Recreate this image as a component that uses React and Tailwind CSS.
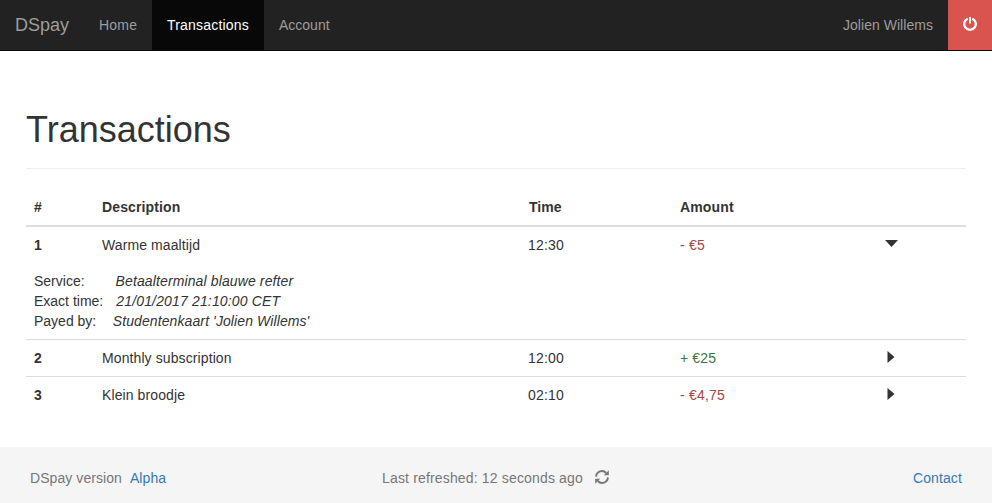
const rows = [
  {
    id: 1, name: 'Warme maaltijd', time: '12:30', amount: '- €5', credit: false, open: true,
  },
  { id: 2, name: 'Monthly subscription', time: '12:00', amount: '+ €25', credit: true },
  { id: 3, name: 'Klein broodje', time: '02:10', amount: '- €4,75', credit: false },
];

function PowerIcon() {
  return (
    <svg className="mt-[17px] size-[14px]" viewBox="0 0 14 14" fill="none" stroke="white" strokeWidth="2.3">
      <path d="M4.7 1.7A5.8 5.8 0 1 0 9.3 1.7" />
      <path d="M7 0v6.6" strokeWidth="2" />
    </svg>
  );
}

function RefreshIcon() {
  return (
    <svg className="ml-[12.5px] mt-[-2px] h-[14px] w-[14px]" viewBox="0 0 14 14" fill="none" stroke="#777" strokeWidth="1.9">
      <path d="M1.1 6.6A5.8 5.8 0 0 1 11.2 3" />
      <path d="M12.9 7.4A5.8 5.8 0 0 1 2.8 11" />
      <path d="M13.8 .2v5H8.8z" fill="#777" stroke="none" />
      <path d="M.2 13.8v-5h5z" fill="#777" stroke="none" />
    </svg>
  );
}

function Caret({ open }) {
  return open ? (
    <svg className="mt-[5px] h-[7px] w-[13px]" viewBox="0 0 13 7"><path d="M0 0h13L6.5 7z" fill="#333" /></svg>
  ) : (
    <svg className="ml-[2px] mt-[3px] h-[12px] w-[8px]" viewBox="0 0 8 12"><path d="M.5 0v12l7-6z" fill="#333" /></svg>
  );
}

function Row({ row }) {
  return (
    <div className={row.id === 1 ? 'border-t-2 border-[#ddd]' : 'border-t border-[#ddd]'}>
      <div className="grid grid-cols-[68px_426px_152px_205px_1fr] p-2">
        <b>{row.id}</b>
        <span className="tracking-[0.1px]">{row.name}</span>
        <span className="tracking-[0.2px]">{row.time}</span>
        <span className={row.credit ? 'tracking-[0.15px] text-[#3c763d]' : 'tracking-[0.2px] text-[#a94442]'}>{row.amount}</span>
        <Caret open={row.open} />
      </div>
      {row.open && (
        <div className="p-2">
          <p>Service:<i className="ml-[31px] tracking-[0.12px]">Betaalterminal blauwe refter</i></p>
          <p>Exact time:<i className="ml-[13px] tracking-[0.16px]">21/01/2017 21:10:00 CET</i></p>
          <p>Payed by:<i className="ml-[16.5px] tracking-[0.1px]">Studentenkaart 'Jolien Willems'</i></p>
        </div>
      )}
    </div>
  );
}

export default function App() {
  return (
    <div className="flex h-[503px] flex-col bg-white font-['Liberation_Sans',Arial,sans-serif] text-[14px] leading-[20px] text-[#333]">
      <nav className="flex h-[51px] shrink-0 border-b border-[#080808] bg-[#222] leading-[50px] text-[#9d9d9d]">
        <a className="w-[84px] px-[15px] text-[18px]">DSpay</a>
        <a className="w-[68px] px-[15px] tracking-[0.2px]">Home</a>
        <a className="w-[112px] bg-[#080808] px-[15px] tracking-[0.2px] text-white">Transactions</a>
        <a className="px-[15px]">Account</a>
        <a className="ml-auto px-[15px] tracking-[0.04px]">Jolien Willems</a>
        <a className="flex w-[44px] justify-center bg-[#d9534f]"><PowerIcon /></a>
      </nav>
      <main className="mx-[26px] pt-[59px]">
        <h1 className="h-[59px] border-b border-[#eee] text-[36px] leading-[40px]">Transactions</h1>
        <div className="mt-[20px]">
          <div className="grid grid-cols-[68px_427px_151px_1fr] p-2 font-bold">
            <span>#</span>
            <span className="tracking-[0.12px]">Description</span>
            <span>Time</span>
            <span className="tracking-[0.15px]">Amount</span>
          </div>
          {rows.map((row) => <Row key={row.id} row={row} />)}
        </div>
      </main>
      <footer className="mt-auto flex h-[56px] items-center bg-[#f5f5f5] px-[30px] pt-[6px] text-[#777]">
        <div className="w-[352px] tracking-[0.07px]">DSpay version<a className="ml-2 text-[#337ab7]">Alpha</a></div>
        <div className="flex items-center tracking-[0.16px]">Last refreshed: 12 seconds ago<RefreshIcon /></div>
        <a className="ml-auto tracking-[0.12px] text-[#337ab7]">Contact</a>
      </footer>
    </div>
  );
}
